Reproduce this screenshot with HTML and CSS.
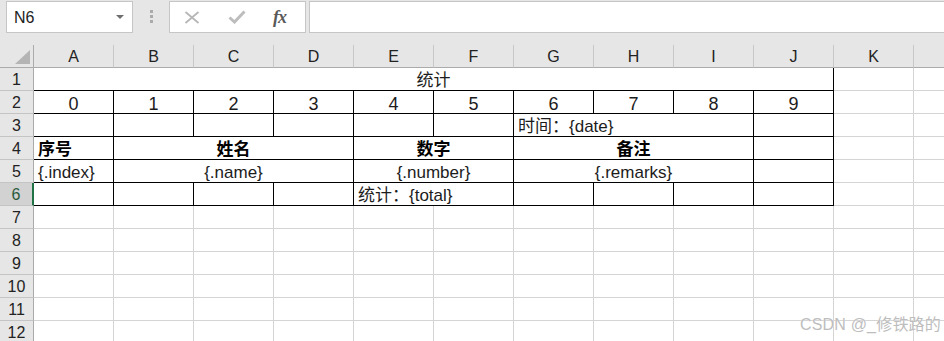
FILE: index.html
```html
<!DOCTYPE html>
<html lang="zh">
<head>
<meta charset="utf-8">
<title>Sheet</title>
<link rel="stylesheet" href="styles.css">
</head>
<body>
<div class="app">
  <div class="toolbar">
    <div class="namebox"><span class="name">N6</span><span class="caret"></span></div>
    <div class="grip"><i></i><i></i><i></i></div>
    <div class="fnbox">
      <svg class="ico-x" width="16" height="13" viewBox="0 0 16 13"><path d="M1.5 1 L14.5 12 M14.5 1 L1.5 12" stroke="#b7b7b7" stroke-width="1.8" fill="none"/></svg>
      <svg class="ico-ok" width="18" height="14" viewBox="0 0 18 14"><path d="M1.5 7.5 L6.5 12 L16.5 1.5" stroke="#bdbdbd" stroke-width="3" fill="none"/></svg>
      <span class="fx">fx</span>
    </div>
    <div class="formula"></div>
  </div>

  <div class="sheet">
    <div class="corner"><span class="tri"></span></div>
    <div class="ch">A</div><div class="ch">B</div><div class="ch">C</div><div class="ch">D</div><div class="ch">E</div><div class="ch">F</div><div class="ch">G</div><div class="ch">H</div><div class="ch">I</div><div class="ch">J</div><div class="ch">K</div><div class="ch"></div>

    <div class="rh">1</div>
    <div class="c b s10 ctr">统计</div><div class="c"></div><div class="c"></div>

    <div class="rh">2</div>
    <div class="c b ctr num">0</div><div class="c b ctr num">1</div><div class="c b ctr num">2</div><div class="c b ctr num">3</div><div class="c b ctr num">4</div><div class="c b ctr num">5</div><div class="c b ctr num">6</div><div class="c b ctr num">7</div><div class="c b ctr num">8</div><div class="c b ctr num">9</div><div class="c"></div><div class="c"></div>

    <div class="rh">3</div>
    <div class="c b"></div><div class="c b"></div><div class="c b"></div><div class="c b"></div><div class="c b"></div><div class="c b"></div><div class="c b s3">时间：{date}</div><div class="c b"></div><div class="c"></div><div class="c"></div>

    <div class="rh">4</div>
    <div class="c b bold">序号</div><div class="c b s3 ctr bold">姓名</div><div class="c b s2 ctr bold">数字</div><div class="c b s3 ctr bold">备注</div><div class="c b"></div><div class="c"></div><div class="c"></div>

    <div class="rh">5</div>
    <div class="c b">{.index}</div><div class="c b s3 ctr">{.name}</div><div class="c b s2 ctr">{.number}</div><div class="c b s3 ctr">{.remarks}</div><div class="c b"></div><div class="c"></div><div class="c"></div>

    <div class="rh sel">6</div>
    <div class="c b"></div><div class="c b"></div><div class="c b"></div><div class="c b"></div><div class="c b s2">统计：{total}</div><div class="c b"></div><div class="c b"></div><div class="c b"></div><div class="c b"></div><div class="c"></div><div class="c"></div>

    <div class="rh">7</div>
    <div class="c"></div><div class="c"></div><div class="c"></div><div class="c"></div><div class="c"></div><div class="c"></div><div class="c"></div><div class="c"></div><div class="c"></div><div class="c"></div><div class="c"></div><div class="c"></div>
    <div class="rh">8</div>
    <div class="c"></div><div class="c"></div><div class="c"></div><div class="c"></div><div class="c"></div><div class="c"></div><div class="c"></div><div class="c"></div><div class="c"></div><div class="c"></div><div class="c"></div><div class="c"></div>
    <div class="rh">9</div>
    <div class="c"></div><div class="c"></div><div class="c"></div><div class="c"></div><div class="c"></div><div class="c"></div><div class="c"></div><div class="c"></div><div class="c"></div><div class="c"></div><div class="c"></div><div class="c"></div>
    <div class="rh">10</div>
    <div class="c"></div><div class="c"></div><div class="c"></div><div class="c"></div><div class="c"></div><div class="c"></div><div class="c"></div><div class="c"></div><div class="c"></div><div class="c"></div><div class="c"></div><div class="c"></div>
    <div class="rh">11</div>
    <div class="c"></div><div class="c"></div><div class="c"></div><div class="c"></div><div class="c"></div><div class="c"></div><div class="c"></div><div class="c"></div><div class="c"></div><div class="c"></div><div class="c"></div><div class="c"></div>
    <div class="rh">12</div>
    <div class="c"></div><div class="c"></div><div class="c"></div><div class="c"></div><div class="c"></div><div class="c"></div><div class="c"></div><div class="c"></div><div class="c"></div><div class="c"></div><div class="c"></div><div class="c"></div>
  </div>

  <div class="watermark">CSDN @_修铁路的</div>
</div>
</body>
</html>
```

FILE: styles.css
```css
* { box-sizing: border-box; }
html, body { margin: 0; padding: 0; }
body {
  width: 944px;
  height: 341px;
  overflow: hidden;
  background: #ffffff;
  font-family: "Liberation Sans", "Noto Sans CJK SC", sans-serif;
}
.app { position: relative; width: 944px; height: 341px; overflow: hidden; }

/* ---------- toolbar ---------- */
.toolbar {
  display: flex;
  align-items: flex-start;
  height: 45px;
  padding-top: 1px;
  background: #e6e6e6;
}
.namebox {
  display: flex;
  align-items: center;
  justify-content: space-between;
  margin-left: 6px;
  width: 127px;
  height: 32px;
  padding: 0 8px 0 7px;
  background: #fff;
  border: 1px solid #c6c6c6;
}
.name { font-size: 16px; color: #222; line-height: 1; padding-top: 1px; }
.caret {
  width: 0; height: 0;
  border-left: 4px solid transparent;
  border-right: 4px solid transparent;
  border-top: 4px solid #6e6e6e;
}
.grip {
  display: flex;
  flex-direction: column;
  gap: 2px;
  margin: 9px 16px 0 17px;
}
.grip i { display: block; width: 3px; height: 3px; background: #ababab; }
.fnbox {
  display: flex;
  align-items: center;
  width: 137px;
  height: 32px;
  background: #fff;
  border: 1px solid #c6c6c6;
  padding-left: 14px;
}
.ico-x { margin-top: 1px; }
.ico-ok { margin-left: 28px; }
.fx {
  margin-left: 27px;
  font-family: "Liberation Serif", serif;
  font-style: italic;
  font-weight: bold;
  font-size: 18px;
  color: #5a5a5a;
  letter-spacing: -1px;
}
.formula {
  flex: 1;
  margin-left: 3px;
  height: 32px;
  background: #fff;
  border: 1px solid #c6c6c6;
  border-right: none;
}

/* ---------- sheet ---------- */
.sheet {
  display: grid;
  grid-template-columns: 34px repeat(11, 80px) 80px;
  grid-auto-rows: 23px;
}
.corner {
  position: relative;
  background: #e6e6e6;
  border-right: 1px solid #ababab;
  border-bottom: 1px solid #ababab;
}
.tri {
  position: absolute;
  right: 3px;
  bottom: 3px;
  width: 0; height: 0;
  border-left: 15px solid transparent;
  border-bottom: 14px solid #b4b4b4;
}
.ch {
  display: flex;
  justify-content: center;
  align-items: flex-end;
  background: #e6e6e6;
  border-right: 1px solid #c8c8c8;
  border-bottom: 1px solid #ababab;
  font-size: 16px;
  line-height: 18px;
  color: #222;
  padding-bottom: 1px;
}
.rh {
  display: flex;
  justify-content: center;
  align-items: flex-end;
  background: #e6e6e6;
  border-right: 1px solid #ababab;
  border-bottom: 1px solid #c4c4c4;
  font-size: 16px;
  line-height: 18px;
  color: #222;
  padding-bottom: 1px;
}
.rh.sel {
  background: #d2d2d2;
  color: #2a5a3c;
  border-right: 2px solid #217346;
}
.c {
  display: flex;
  align-items: flex-end;
  justify-content: flex-start;
  padding: 0 4px 0 4px;
  border-right: 1px solid #d4d4d4;
  border-bottom: 1px solid #d4d4d4;
  font-size: 17px;
  line-height: 18px;
  color: #1c1c1c;
  white-space: nowrap;
  overflow: hidden;
}
.c.b { border-right-color: #000; border-bottom-color: #000; }
.c.ctr { justify-content: center; }
.c.num { font-size: 18px; }
.c.bold { font-weight: bold; color: #000; }
.s2 { grid-column: span 2; }
.s3 { grid-column: span 3; }
.s10 { grid-column: span 10; }

/* ---------- watermark ---------- */
.watermark {
  position: absolute;
  right: 3px;
  bottom: 6px;
  font-size: 16px;
  color: #bdbdbd;
  text-shadow: 0 0 1px #fff;
  letter-spacing: 0.2px;
}
```
